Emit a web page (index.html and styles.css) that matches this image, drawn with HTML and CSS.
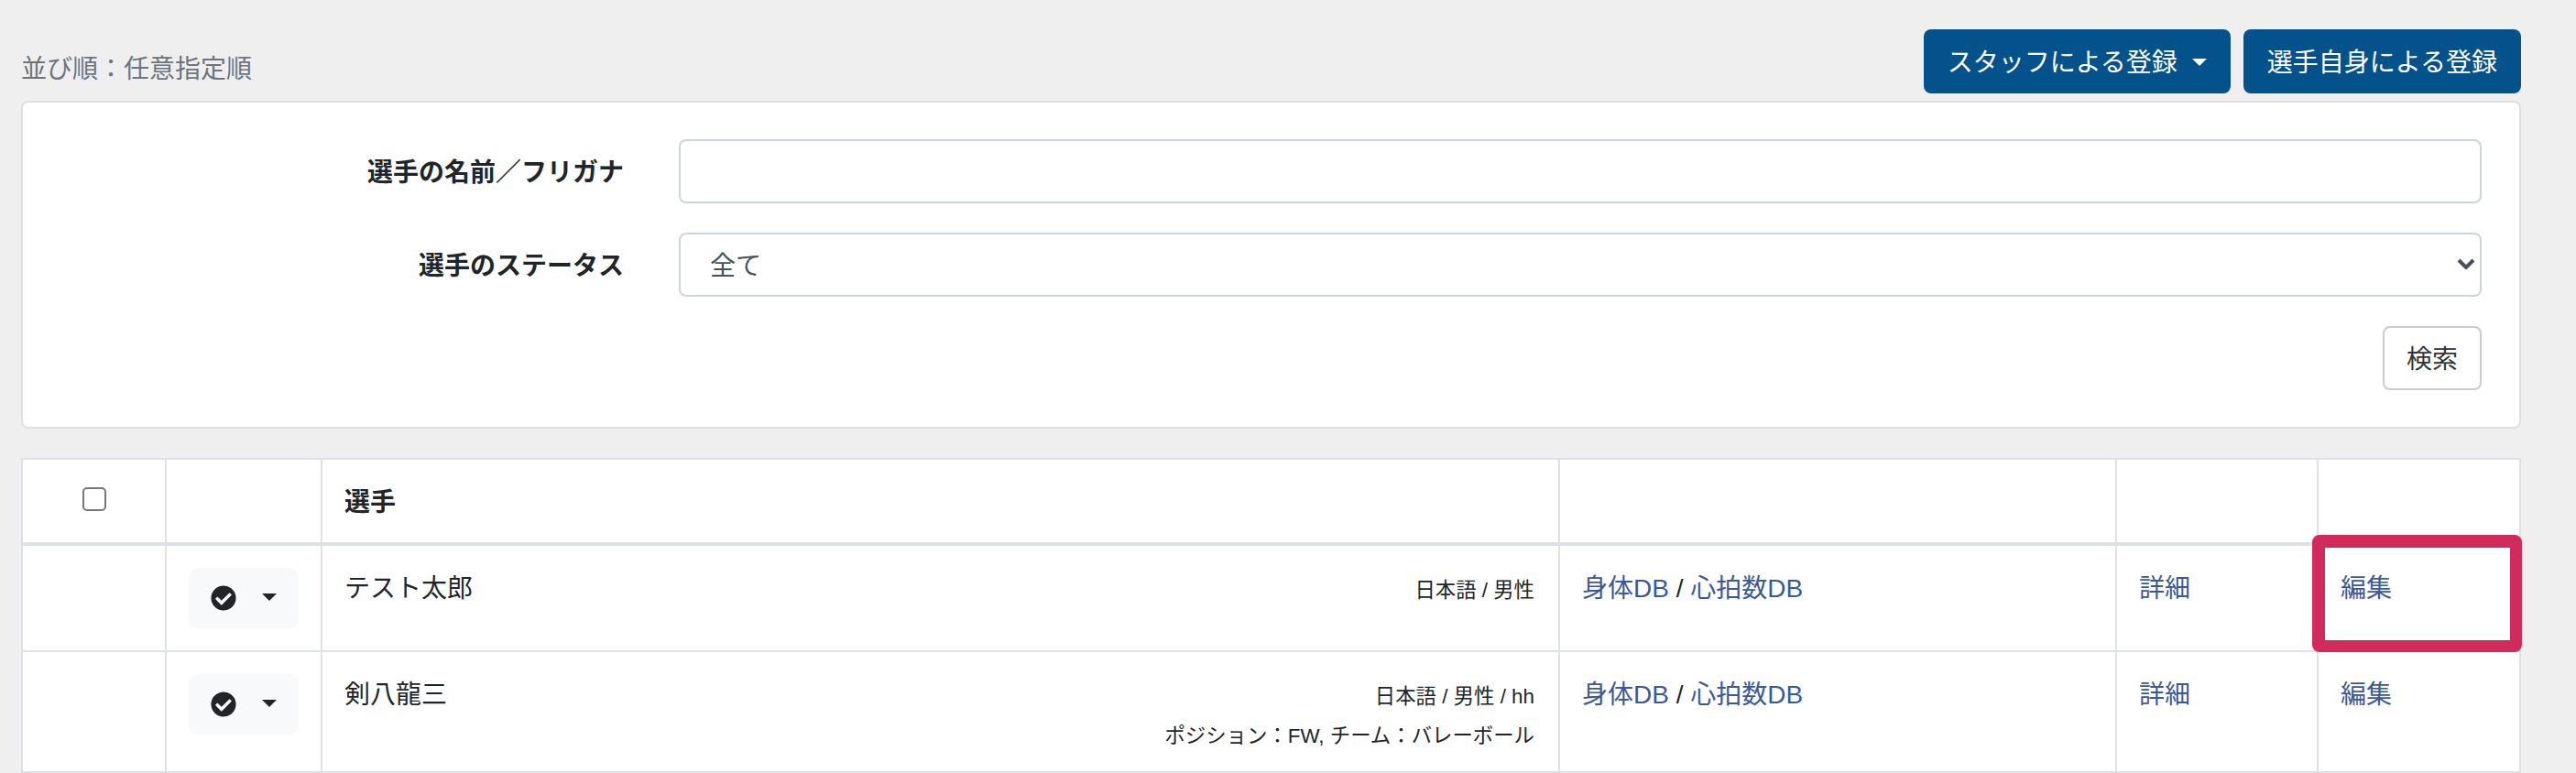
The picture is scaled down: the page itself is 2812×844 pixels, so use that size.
FILE: index.html
```html
<!DOCTYPE html>
<html lang="ja">
<head>
<meta charset="utf-8">
<title>選手一覧</title>
<link rel="stylesheet" href="styles.css">
</head>
<body>
<div class="page">

	<div class="top-bar">
		<span class="sort-note">並び順：任意指定順</span>
		<div class="top-actions">
			<button class="btn btn-primary">スタッフによる登録<span class="caret caret-white"></span></button>
			<button class="btn btn-primary">選手自身による登録</button>
		</div>
	</div>

	<form class="search-card">
		<label class="search-label" for="playerName">選手の名前／フリガナ</label>
		<input class="search-field" id="playerName" type="text">

		<label class="search-label" for="playerStatus">選手のステータス</label>
		<div class="select-wrap">
			<select class="search-field search-select" id="playerStatus">
				<option>全て</option>
			</select>
			<svg class="select-arrow" viewBox="0 0 20 12"><path d="M2 2l8 8 8-8" fill="none" stroke="#495057" stroke-width="4"/></svg>
		</div>

		<div class="search-submit">
			<button class="btn btn-plain" type="button">検索</button>
		</div>
	</form>

	<table class="player-table">
		<colgroup>
			<col class="col-check">
			<col class="col-menu">
			<col class="col-name">
			<col class="col-db">
			<col class="col-detail">
			<col class="col-edit">
		</colgroup>
		<thead>
			<tr>
				<th class="check-cell"><input class="check-box" type="checkbox"></th>
				<th></th>
				<th>選手</th>
				<th></th>
				<th></th>
				<th></th>
			</tr>
		</thead>
		<tbody>
			<tr>
				<td></td>
				<td class="menu-cell">
					<div class="row-menu">
						<svg class="check-icon" viewBox="0 0 512 512"><path d="M504 256c0 136.967-111.033 248-248 248S8 392.967 8 256 119.033 8 256 8s248 111.033 248 248zM227.314 387.314l184-184c6.248-6.248 6.248-16.379 0-22.627l-22.627-22.627c-6.248-6.249-16.379-6.249-22.628 0L216 308.118l-70.059-70.059c-6.248-6.248-16.379-6.248-22.628 0l-22.627 22.627c-6.248 6.248-6.248 16.379 0 22.627l104 104c6.249 6.25 16.379 6.25 22.628.001z"/></svg>
						<span class="caret"></span>
					</div>
				</td>
				<td class="name-cell">
					<div class="name-row">
						<span>テスト太郎</span>
						<div class="player-info">
							<div class="info-first">日本語 / 男性</div>
						</div>
					</div>
				</td>
				<td><a href="#">身体DB</a> / <a href="#">心拍数DB</a></td>
				<td><a href="#">詳細</a></td>
				<td class="edit-cell"><a href="#">編集</a><div class="highlight-box"></div></td>
			</tr>
			<tr>
				<td></td>
				<td class="menu-cell">
					<div class="row-menu">
						<svg class="check-icon" viewBox="0 0 512 512"><path d="M504 256c0 136.967-111.033 248-248 248S8 392.967 8 256 119.033 8 256 8s248 111.033 248 248zM227.314 387.314l184-184c6.248-6.248 6.248-16.379 0-22.627l-22.627-22.627c-6.248-6.249-16.379-6.249-22.628 0L216 308.118l-70.059-70.059c-6.248-6.248-16.379-6.248-22.628 0l-22.627 22.627c-6.248 6.248-6.248 16.379 0 22.627l104 104c6.249 6.25 16.379 6.25 22.628.001z"/></svg>
						<span class="caret"></span>
					</div>
				</td>
				<td class="name-cell">
					<div class="name-row">
						<span>剣八龍三</span>
						<div class="player-info">
							<div class="info-first">日本語 / 男性 / hh</div>
							<div class="info-second">ポジション：FW, チーム：バレーボール</div>
						</div>
					</div>
				</td>
				<td><a href="#">身体DB</a> / <a href="#">心拍数DB</a></td>
				<td><a href="#">詳細</a></td>
				<td><a href="#">編集</a></td>
			</tr>
		</tbody>
	</table>

</div>
</body>
</html>
```

FILE: styles.css
```css
html, body {
	margin: 0;
	height: 844px;
	overflow: hidden;
}
body {
	background-color: #efefef;
	color: #212529;
	font-family: "Liberation Sans", "Noto Sans CJK JP", sans-serif;
	font-size: 28px;
	line-height: 42px;
}
.page {
	width: 2729px;
	margin-left: 23px;
	padding-top: 32px;
}

/* top bar */
.top-bar {
	display: flex;
	justify-content: space-between;
	align-items: flex-end;
	margin-bottom: 8px;
}
.sort-note {
	color: #6c757d;
	padding-bottom: 5px;
}
.top-actions {
	display: flex;
	gap: 14px;
}
.btn {
	font: inherit;
	height: 70px;
	padding: 14px 24px 10px;
	border: 2px solid transparent;
	border-radius: 8px;
	box-sizing: border-box;
	cursor: pointer;
	white-space: nowrap;
}
.btn-primary {
	background-color: #03528c;
	color: #ffffff;
}
.btn-plain {
	background-color: #ffffff;
	border-color: #cccccc;
	color: #333333;
}
.caret {
	display: inline-block;
	width: 0;
	height: 0;
	border-top: 8.4px solid #212529;
	border-left: 8.4px solid transparent;
	border-right: 8.4px solid transparent;
}
.caret-white {
	border-top-color: #ffffff;
	margin-left: 16px;
	vertical-align: 6px;
}

/* search form */
.search-card {
	display: grid;
	grid-template-columns: 616px 1fr;
	column-gap: 60px;
	row-gap: 32px;
	align-items: center;
	width: 2729px;
	box-sizing: border-box;
	padding: 40px 41px 40px 40px;
	background-color: #ffffff;
	border: 2px solid #dfdfdf;
	border-radius: 8px;
}
.search-label {
	padding-top: 4px;
	font-weight: bold;
	text-align: right;
}
.search-field {
	display: block;
	width: 100%;
	height: 70px;
	padding: 14px 32px 10px;
	box-sizing: border-box;
	background-color: #ffffff;
	border: 2px solid #ced4da;
	border-radius: 8px;
	color: #495057;
	font: inherit;
}
.search-select {
	appearance: none;
}
.select-wrap {
	position: relative;
}
.select-arrow {
	position: absolute;
	right: 7px;
	top: 28px;
	width: 20px;
	height: 12px;
}
.search-submit {
	grid-column: 1 / 3;
	display: flex;
	justify-content: flex-end;
}

/* player table */
.player-table {
	table-layout: fixed;
	width: 2729px;
	margin-top: 32px;
	background-color: #ffffff;
	border-collapse: separate;
	border-spacing: 0;
	border-top: 2px solid #dee2e6;
	border-left: 2px solid #dee2e6;
}
.col-check { width: 157px; }
.col-menu { width: 170px; }
.col-name { width: 1351px; }
.col-db { width: 608px; }
.col-detail { width: 220px; }
.col-edit { width: 221px; }
.player-table th,
.player-table td {
	padding: 26px 24px 22px;
	box-sizing: border-box;
	border-right: 2px solid #dee2e6;
	border-bottom: 2px solid #dee2e6;
	text-align: left;
	vertical-align: top;
}
.player-table th {
	border-bottom-width: 4px;
}
.player-table .check-cell {
	padding: 0;
}
.check-box {
	appearance: none;
	display: block;
	width: 26px;
	height: 26px;
	margin: 30px 0 0 65px;
	background-color: #ffffff;
	border: 2px solid #767676;
	border-radius: 5px;
}
.player-table .menu-cell {
	padding-top: 24px;
	padding-bottom: 24px;
}
.row-menu {
	display: flex;
	align-items: center;
	gap: 28px;
	width: 120px;
	height: 66px;
	padding-left: 24px;
	box-sizing: border-box;
	background-color: #f8f9fa;
	border-radius: 10px;
}
.check-icon {
	width: 28px;
	height: 28px;
	fill: #212529;
}
.row-menu .caret {
	margin-bottom: 2px;
}
.player-table .name-cell {
	padding-bottom: 18px;
	padding-right: 26px;
}
.name-row {
	display: flex;
	justify-content: space-between;
}
.player-info {
	font-size: 22.4px;
	text-align: right;
}
.info-first {
	line-height: 46px;
}
.info-second {
	line-height: 40px;
}
a {
	color: #3b5998;
	text-decoration: none;
}
.edit-cell {
	position: relative;
}
.highlight-box {
	position: absolute;
	left: -7px;
	top: -12px;
	width: 229px;
	height: 128px;
	box-sizing: border-box;
	border: 14px solid #d12a5c;
	border-right-width: 13px;
	border-bottom-width: 13px;
	border-radius: 8px;
}
```
